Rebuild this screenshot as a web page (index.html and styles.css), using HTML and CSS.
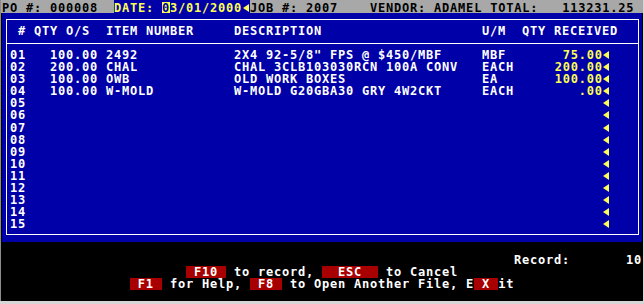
FILE: index.html
```html
<!DOCTYPE html>
<html lang="en">
<head>
<meta charset="UTF-8">
<title>Receive PO</title>
<link rel="stylesheet" href="styles.css">
</head>
<body>

<div class="screen">

<header class="bar"><span class="seg po">PO #: 000008</span><span class="seg date">DATE: <span class="cursor">0</span>3/01/2000<span class="arr"><svg width="8" height="12" viewBox="0 0 8 12"><polygon points="1,6 7,2 7,10" fill="#fcfc54"/></svg></span></span><span class="seg rest">JOB #: 2007    VENDOR: ADAMEL TOTAL:   113231.25</span></header>

<main class="panel">
<div class="frame">
<div class="row head">
<span class="c-no">#</span>
<span class="c-qty">QTY O/S</span>
<span>ITEM NUMBER</span>
<span>DESCRIPTION</span>
<span>U/M</span>
<span class="c-hrecv">QTY RECEIVED</span>
</div>
<div class="lines" id="lines"></div>
</div>
</main>

<footer class="keys">
<div class="record">Record:       10</div>
<div class="line"><span class="key"> F10 </span> to record, <span class="key">  ESC  </span> to Cancel</div>
<div class="line"><span class="key"> F1 </span> for Help, <span class="key"> F8 </span> to Open Another File, E<span class="key"> X </span>it</div>
</footer>

</div>

<script>
const items=[
  {qty:"100.00",item:"2492",desc:"2X4 92-5/8\" FPS @ $450/MBF",um:"MBF",recv:"75.00"},
  {qty:"200.00",item:"CHAL",desc:"CHAL 3CLB103030RCN 100A CONV",um:"EACH",recv:"200.00"},
  {qty:"100.00",item:"OWB",desc:"OLD WORK BOXES",um:"EA",recv:"100.00"},
  {qty:"100.00",item:"W-MOLD",desc:"W-MOLD G20GBA30 GRY 4W2CKT",um:"EACH",recv:".00"}
];

const arrow=`<span class="arr"><svg width="8" height="12" viewBox="0 0 8 12"><polygon points="1,6 7,2 7,10" fill="#fcfc54"/></svg></span>`;

let html="";
for(let i=0;i<15;i++){
  const a=items[i]||{};
  const no=String(i+1).padStart(2,"0");
  html+=`
  <div class="row">
    <span>${no}</span>
    <span class="c-qty num">${a.qty||""}</span>
    <span>${a.item||""}</span>
    <span>${a.desc||""}</span>
    <span>${a.um||""}</span>
    <span class="c-recv">${a.recv||""}</span>
    ${arrow}
  </div>`;
}
document.getElementById("lines").innerHTML=html;
</script>

</body>
</html>
```

FILE: styles.css
```css
*{box-sizing:border-box}
body{margin:0;background:#d6d6d6;font-family:"DejaVu Sans Mono",monospace;font-weight:bold;font-size:12px;letter-spacing:0.78px}
.screen{width:643px;height:301px;background:#000;border-left:1px solid #8c8c8c}

.bar{display:flex;height:13px;background:#a8a8a8;color:#000;white-space:pre}
.seg{height:13px;padding-top:2px;line-height:12px}
.po{width:113px;padding-left:1px}
.date{width:136px;background:#0000a8;color:#fcfc54}
.rest{flex:1}
.cursor{display:inline-block;height:11px;padding-top:1px;line-height:10px;background:#fcfc54;color:#0000a8}
.arr{display:inline-block;width:8px;height:12px;vertical-align:top}
.arr svg{display:block}

.panel{margin-left:1px;width:640px;height:229px;background:#0000a8;padding:6px 3px 7px 4px;color:#fff}
.frame{height:216px;border:1px solid #fff}
.row{display:grid;grid-template-columns:24px 72px 128px 248px 40px 80px 8px;height:12.1px;line-height:12px;padding-left:3px;white-space:nowrap}
.head{margin-top:5px;height:12px}
.head .c-no{padding-left:8px}
.c-hrecv{grid-column:span 2}
.num{text-align:right;padding-right:8px}
.c-recv{text-align:right;color:#fcfc54;margin-right:-0.78px}
.lines{margin-top:6px;padding-top:5px;border-top:1px solid #fff}

.keys{margin-left:1px;width:640px;padding-top:12px;color:#fff;line-height:12px}
.record,.line{height:12px;white-space:pre}
.record{text-align:right}
.line{text-align:center}
.key{display:inline-block;height:12px;line-height:12px;vertical-align:top;background:#a80000}
```
